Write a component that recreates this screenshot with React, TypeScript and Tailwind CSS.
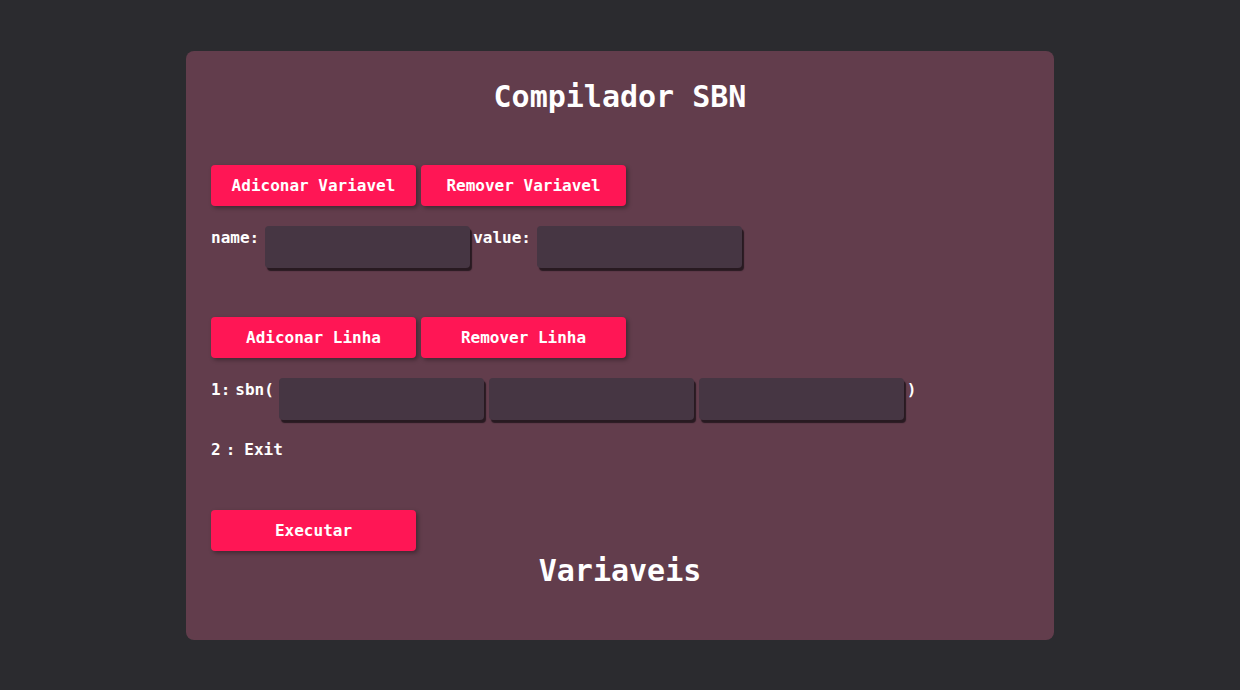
const mono = "font-['DejaVu_Sans_Mono','Liberation_Mono',monospace]";

function PinkButton({ children }: { children: React.ReactNode }) {
  return (
    <button className="w-[205px] h-[41px] rounded-[4px] bg-[#ff1655] text-white text-[16px] font-bold shadow-[2px_2px_4px_rgba(0,0,0,0.35)]">
      {children}
    </button>
  );
}

function Field() {
  return (
    <input
      type="text"
      className="w-[205px] h-[42px] rounded-[4px] bg-[#463643] text-white outline-none shadow-[2px_3px_1px_rgba(30,20,26,0.85)]"
    />
  );
}

export default function App() {
  return (
    <div className={`min-h-[690px] bg-[#2b2b2f] pt-[51px] ${mono}`}>
      <div className="mx-auto w-[868px] h-[589px] rounded-[8px] bg-[#623d4c] px-[25px] pt-[28px] text-white">
        <h1 className="text-center text-[30px] leading-[36px] font-bold">Compilador SBN</h1>

        <div className="mt-[50px] flex gap-[5px]">
          <PinkButton>Adiconar Variavel</PinkButton>
          <PinkButton>Remover Variavel</PinkButton>
        </div>

        <div className="mt-[20px] flex items-start text-[16px] font-bold">
          <span className="leading-[24px] mr-[6px]">name:</span>
          <Field />
          <span className="leading-[24px] ml-[3px] mr-[6px]">value:</span>
          <Field />
        </div>

        <div className="mt-[49px] flex gap-[5px]">
          <PinkButton>Adiconar Linha</PinkButton>
          <PinkButton>Remover Linha</PinkButton>
        </div>

        <div className="mt-[20px] flex items-start text-[16px] font-bold">
          <span className="leading-[24px] mr-[5px]">1:</span>
          <span className="leading-[24px] mr-[5px]">sbn(</span>
          <div className="flex gap-[5px]">
            <Field />
            <Field />
            <Field />
          </div>
          <span className="leading-[24px] ml-[3px]">)</span>
        </div>

        <div className="mt-[18px] flex text-[16px] leading-[24px] font-bold">
          <span>2</span>
          <span className="ml-[5px]">:</span>
          <span className="ml-[9px]">Exit</span>
        </div>

        <div className="mt-[48px]">
          <PinkButton>Executar</PinkButton>
        </div>

        <h2 className="mt-[2px] text-center text-[30px] leading-[36px] font-bold">Variaveis</h2>
      </div>
    </div>
  );
}
